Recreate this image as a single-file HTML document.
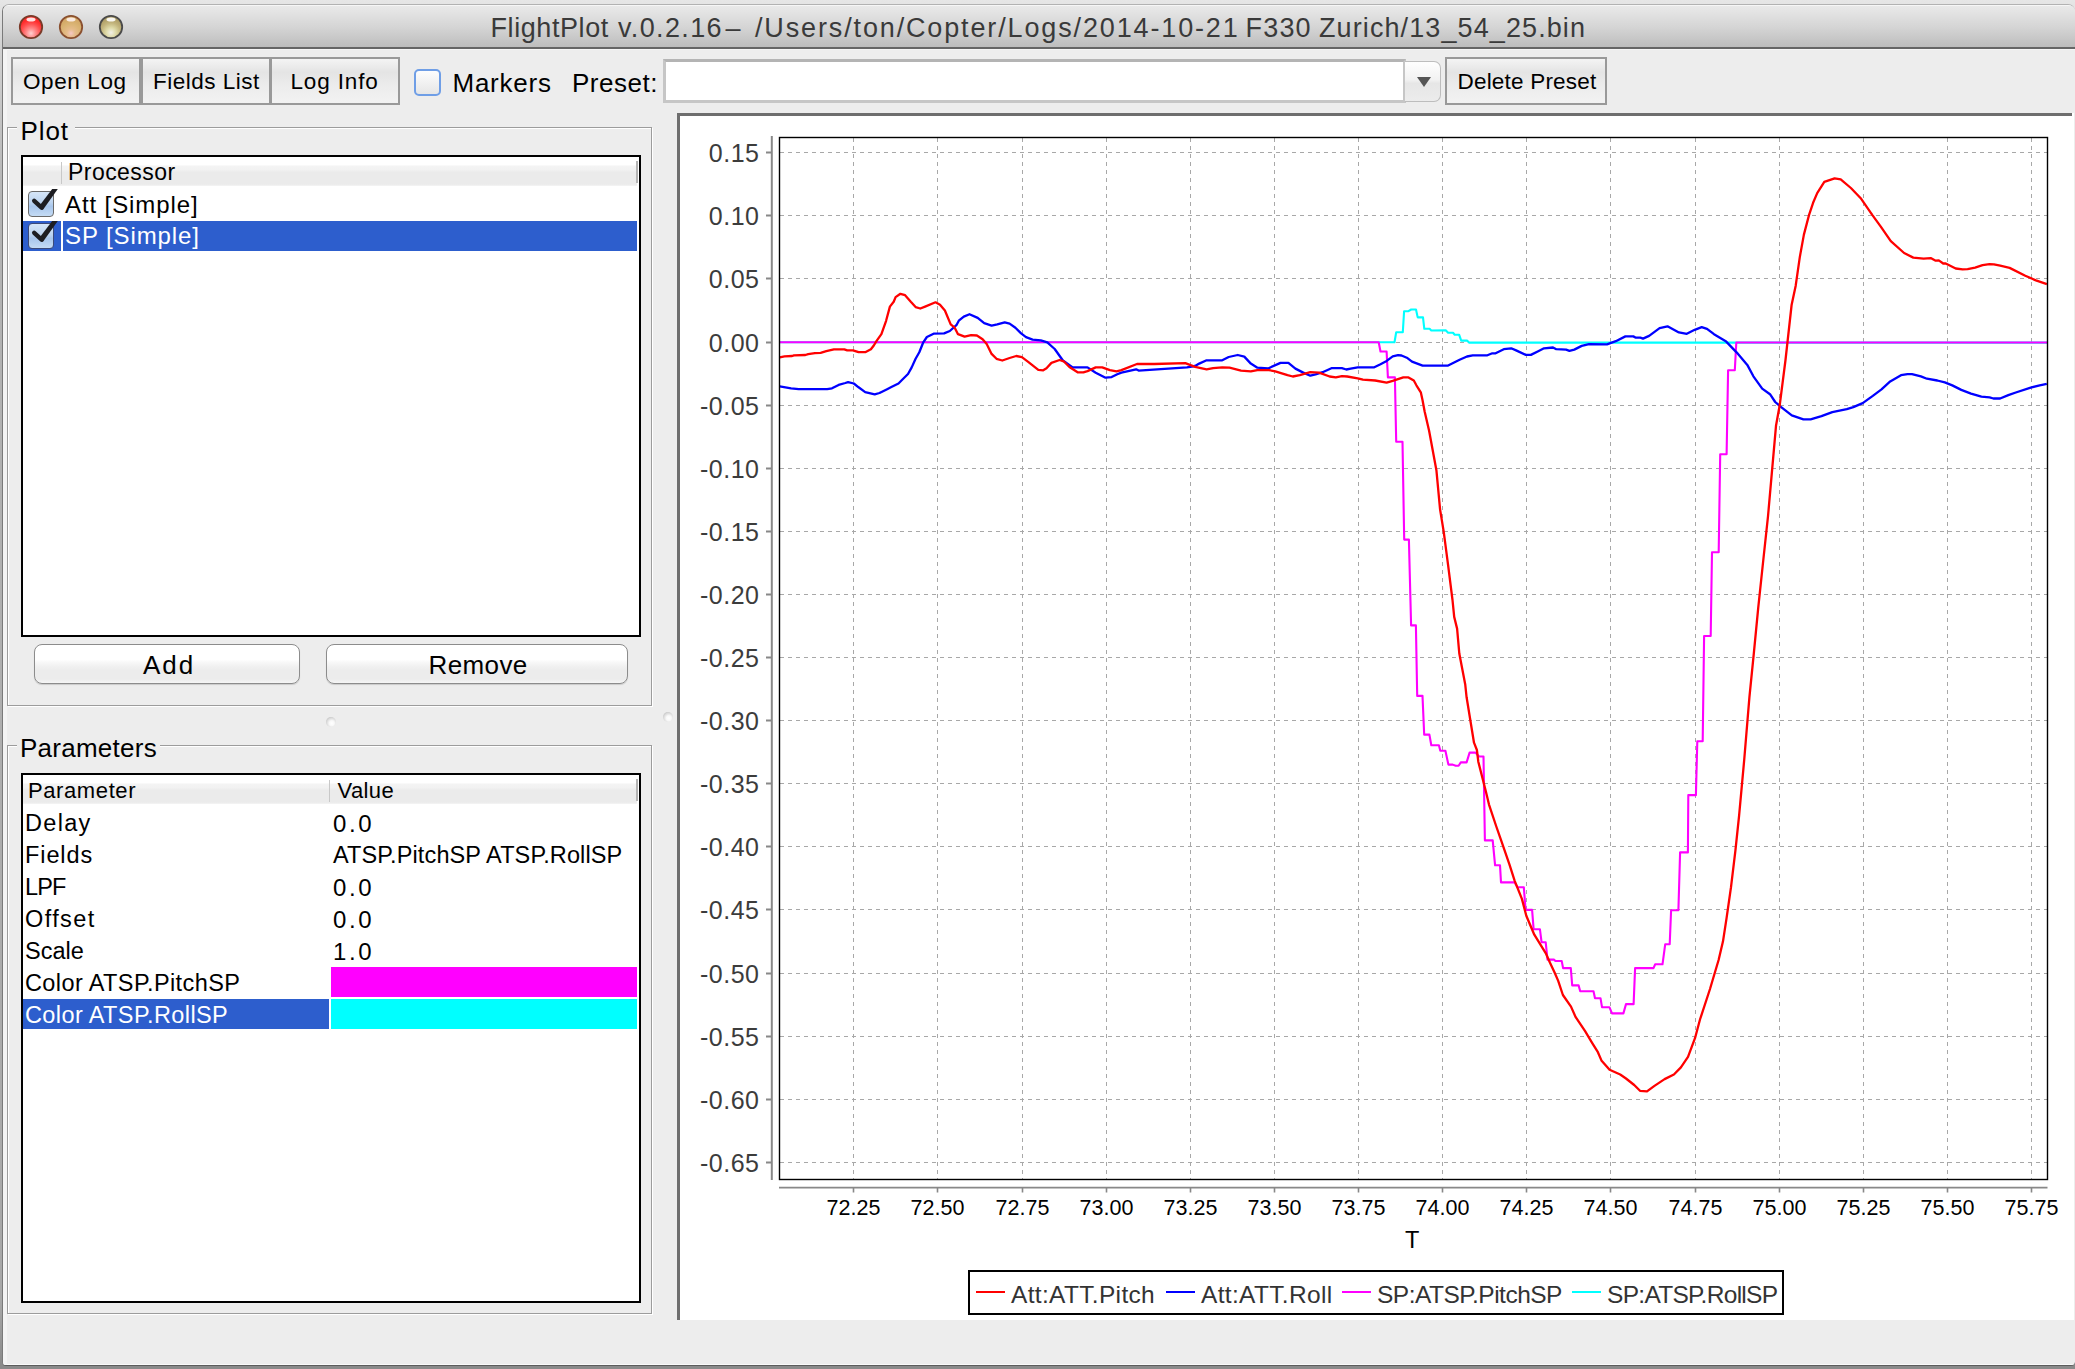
<!DOCTYPE html>
<html><head><meta charset="utf-8">
<style>
html,body{margin:0;padding:0;}
body{width:2075px;height:1369px;position:relative;overflow:hidden;background:linear-gradient(#e6e6e6,#d2d2d2 45px,#b4b4b4 200px,#a8a8a8 1300px,#8a8a8a 1366px);font-family:"Liberation Sans",sans-serif;}
.a{position:absolute;}
.t{position:absolute;white-space:pre;line-height:1;color:#000;}
#win{position:absolute;left:2px;top:4px;width:2073px;height:1362px;background:#ededed;border-radius:7px 7px 4px 4px;border-left:1px solid #7a7a7a;border-top:1px solid #b2b2b2;border-bottom:1px solid #5c5c5c;box-sizing:border-box;overflow:hidden;}
#win:after{content:"";position:absolute;left:0;top:44px;width:4px;bottom:0;background:#f4f4f4;}
#win:before{content:"";position:absolute;left:0;right:0;bottom:0;height:1px;background:#fafafa;}
#title{position:absolute;left:0;top:0;width:100%;height:42px;background:linear-gradient(#e9e9e9,#d5d5d5 50%,#bcbcbc);border-top:1px solid #f6f6f6;}
#tline{position:absolute;left:0;top:42px;width:100%;height:2px;background:#666;border-bottom:1px solid #f6f6f6;}
.light{position:absolute;width:24px;height:24px;border-radius:50%;}
.tbtn{position:absolute;top:57px;height:44px;border:2px solid #999;background:linear-gradient(#f4f4f4,#e4e4e4 30%,#ececec 60%,#f2f2f2);}
.etch{position:absolute;border:1px solid #9c9c9c;box-shadow:inset 1px 1px 0 #fff,1px 1px 0 #fff;}
.tbl{position:absolute;background:#fff;border:2px solid #000;}
.hdr{position:absolute;background:linear-gradient(#fff 0,#fff 26%,#f4f4f4 32%,#f2f2f2 44%,#ebebeb 52%,#ebebeb 94%,#f5f5f5 100%);}
.rbtn{position:absolute;border:1px solid #8c8c8c;border-radius:8px;background:linear-gradient(#ffffff 0,#ffffff 38%,#f8f8f8 45%,#f1f1f1 56%,#ececec 66%,#ececec 90%,#f6f6f6 100%);box-shadow:0 1px 1px rgba(0,0,0,0.15);}
.dot{position:absolute;width:10px;height:10px;border-radius:50%;background:radial-gradient(circle at 58% 62%,#ffffff 0,#f8f8f8 30%,#d8d8d8 62%,#a6a6a6 100%);}
.yl{left:658.5px;width:101px;text-align:right;font-size:25px;color:#3c3c3c;letter-spacing:0.5px;}
.xl{width:120px;text-align:center;font-size:21.5px;color:#000;}
.lg{top:1282.5px;font-size:24.5px;color:#333;letter-spacing:0.33px;}
.ttl{top:15px;font-size:27px;color:#3a3a3a;}
</style></head>
<body>
<div id="win">
  <div id="title"></div>
  <div id="tline"></div>
</div>
<!-- traffic lights -->
<svg class="a" style="left:0;top:0" width="140" height="50">
<defs>
<radialGradient id="gr" cx="50%" cy="78%" r="60%"><stop offset="0" stop-color="#ffd0d0"/><stop offset="0.35" stop-color="#ff8a8a"/><stop offset="0.7" stop-color="#ff5050"/><stop offset="1" stop-color="#ff2a2a"/></radialGradient>
<radialGradient id="gy" cx="50%" cy="78%" r="60%"><stop offset="0" stop-color="#f6c8c4"/><stop offset="0.3" stop-color="#e6bc8c"/><stop offset="0.7" stop-color="#dab474"/><stop offset="1" stop-color="#d4aa68"/></radialGradient>
<radialGradient id="gg" cx="50%" cy="75%" r="62%"><stop offset="0" stop-color="#f2f0e8"/><stop offset="0.35" stop-color="#dedaa8"/><stop offset="0.7" stop-color="#c2b47c"/><stop offset="1" stop-color="#b0a068"/></radialGradient>
</defs>
<circle cx="31" cy="27" r="11.2" fill="url(#gr)" stroke="#7a3a28" stroke-width="1.8"/>
<ellipse cx="31" cy="19.5" rx="4.5" ry="2" fill="#ffffff" opacity="0.85"/>
<circle cx="71" cy="27" r="11.2" fill="url(#gy)" stroke="#8a5030" stroke-width="1.8"/>
<ellipse cx="71" cy="19.5" rx="4.5" ry="2" fill="#fff4f4" opacity="0.85"/>
<circle cx="111" cy="27" r="11.2" fill="url(#gg)" stroke="#4a4a4a" stroke-width="1.8"/>
<ellipse cx="111" cy="19.5" rx="4.5" ry="2" fill="#ffffff" opacity="0.9"/>
</svg>
<div class="t ttl" style="left:490.5px;letter-spacing:0.58px;">FlightPlot</div>
<div class="t ttl" style="left:618px;letter-spacing:1.35px;">v.0.2.16</div>
<div class="t ttl" style="left:725.5px;letter-spacing:0px;">–</div>
<div class="t ttl" style="left:755px;letter-spacing:1.86px;">/Users/ton/Copter/Logs/2014-10-21</div>
<div class="t ttl" style="left:1245.5px;letter-spacing:1.2px;">F330</div>
<div class="t ttl" style="left:1319px;letter-spacing:1.1px;">Zurich/13_54_25.bin</div>

<!-- toolbar -->
<div class="tbtn" style="left:11px;width:126px;"></div>
<div class="tbtn" style="left:141px;width:126px;"></div>
<div class="tbtn" style="left:270px;width:126px;"></div>
<div class="t" style="left:23px;top:70.5px;font-size:22.5px;letter-spacing:0.6px;">Open Log</div>
<div class="t" style="left:153px;top:70.5px;font-size:22.5px;letter-spacing:0.5px;">Fields List</div>
<div class="t" style="left:290.5px;top:70.5px;font-size:22.5px;letter-spacing:0.85px;">Log Info</div>
<div class="a" style="left:414px;top:69px;width:23px;height:23px;border:2px solid #6f9ee6;border-radius:5px;background:linear-gradient(#fdfdfd,#e6e6e6);"></div>
<div class="t" style="left:452.5px;top:69.5px;font-size:26px;letter-spacing:0.75px;">Markers</div>
<div class="t" style="left:572px;top:69.5px;font-size:26px;letter-spacing:0.5px;">Preset:</div>
<div class="a" style="left:663px;top:59px;width:737px;height:38px;background:#fff;border:3px solid #c6c6c6;border-top-color:#b4b4b4;"></div>
<div class="a" style="left:1405px;top:61px;width:35px;height:39px;border:1px solid #bdbdbd;border-left:none;border-radius:0 7px 7px 0;background:linear-gradient(#fefefe,#f2f2f2 45%,#e6e6e6 55%,#ececec);"></div>
<div class="a" style="left:1417px;top:77px;width:0;height:0;border-left:7px solid transparent;border-right:7px solid transparent;border-top:10px solid #555;"></div>
<div class="tbtn" style="left:1445px;width:158px;"></div>
<div class="t" style="left:1457.5px;top:70.5px;font-size:22.5px;letter-spacing:0.2px;">Delete Preset</div>

<!-- left: Plot -->
<div class="etch" style="left:7px;top:127px;width:643px;height:577px;"></div>
<div class="a" style="left:17px;top:115px;width:58px;height:20px;background:#ededed;"></div>
<div class="t" style="left:20.5px;top:118px;font-size:26px;letter-spacing:0.9px;">Plot</div>
<div class="tbl" style="left:21px;top:155px;width:616px;height:478px;"></div>
<div class="hdr" style="left:23px;top:157px;width:614px;height:29px;"></div>
<div class="a" style="left:61px;top:162px;width:1px;height:22px;background:#c8c8c8;"></div>
<div class="a" style="left:636px;top:161px;width:2px;height:22px;background:#b4b4b4;"></div>
<div class="t" style="left:68px;top:161px;font-size:23px;letter-spacing:0.45px;">Processor</div>
<div class="a" style="left:23px;top:221px;width:38px;height:30px;background:#2d5ecd;"></div>
<div class="a" style="left:63px;top:221px;width:574px;height:30px;background:#2d5ecd;"></div>
<div class="t" style="left:65px;top:193px;font-size:24px;letter-spacing:0.9px;">Att [Simple]</div>
<div class="t" style="left:65px;top:224px;font-size:24px;color:#fff;letter-spacing:0.9px;">SP [Simple]</div>
<div class="a" style="left:28px;top:191px;width:24px;height:24px;border:1px solid #6a6a6a;border-radius:4px;background:linear-gradient(#d6e6f8,#bcd4f0 45%,#a8c6ec 60%,#c4dbf4);"></div>
<div class="a" style="left:28px;top:223px;width:24px;height:24px;border:1px solid #3c4a78;border-radius:4px;background:linear-gradient(#d6e6f8,#bcd4f0 45%,#a8c6ec 60%,#c4dbf4);"></div>
<svg class="a" style="left:0;top:0" width="700" height="260"><path d="M34.2 200.8 L41.6 207.6" stroke="#1d1e22" stroke-width="4.4" stroke-linecap="round" fill="none"/><polygon points="38.9,206.6 42.8,210.0 57.8,189.0 52.2,189.0" fill="#1d1e22"/><path d="M34.2 232.8 L41.6 239.6" stroke="#1d1e22" stroke-width="4.4" stroke-linecap="round" fill="none"/><polygon points="38.9,238.6 42.8,242.0 57.8,221.0 52.2,221.0" fill="#1d1e22"/></svg>

<div class="rbtn" style="left:34px;top:644px;width:264px;height:38px;"></div>
<div class="rbtn" style="left:326px;top:644px;width:300px;height:38px;"></div>
<div class="t" style="left:143px;top:652px;font-size:26px;letter-spacing:2px;">Add</div>
<div class="t" style="left:428.5px;top:652px;font-size:26px;letter-spacing:0.4px;">Remove</div>

<div class="dot" style="left:326px;top:717px;"></div>
<div class="dot" style="left:663px;top:712px;"></div>

<!-- left: Parameters -->
<div class="etch" style="left:7px;top:745px;width:643px;height:567px;"></div>
<div class="a" style="left:17px;top:733px;width:143px;height:20px;background:#ededed;"></div>
<div class="t" style="left:20px;top:735px;font-size:26px;letter-spacing:0.25px;">Parameters</div>
<div class="tbl" style="left:21px;top:773px;width:616px;height:526px;"></div>
<div class="hdr" style="left:23px;top:775px;width:614px;height:29px;"></div>
<div class="a" style="left:329px;top:780px;width:1px;height:22px;background:#c8c8c8;"></div>
<div class="a" style="left:636px;top:779px;width:2px;height:22px;background:#b4b4b4;"></div>
<div class="t" style="left:28px;top:779.5px;font-size:22px;letter-spacing:0.6px;">Parameter</div>
<div class="t" style="left:337.5px;top:779.5px;font-size:22px;letter-spacing:0.4px;">Value</div>

<div class="t" style="left:25px;top:811.5px;font-size:23.5px;letter-spacing:1.3px;">Delay</div>
<div class="t" style="left:25px;top:843.5px;font-size:23.5px;letter-spacing:0.9px;">Fields</div>
<div class="t" style="left:25px;top:875.5px;font-size:23.5px;letter-spacing:-0.9px;">LPF</div>
<div class="t" style="left:25px;top:907.5px;font-size:23.5px;letter-spacing:1.4px;">Offset</div>
<div class="t" style="left:25px;top:939.5px;font-size:23.5px;">Scale</div>
<div class="t" style="left:25px;top:971.5px;font-size:23.5px;letter-spacing:0.4px;">Color ATSP.PitchSP</div>
<div class="a" style="left:23px;top:999px;width:306px;height:30px;background:#2d5ecd;"></div>
<div class="t" style="left:25px;top:1003.5px;font-size:23.5px;color:#fff;letter-spacing:0.4px;">Color ATSP.RollSP</div>
<div class="t" style="left:333px;top:811.5px;font-size:24px;letter-spacing:2.6px;">0.0</div>
<div class="t" style="left:333px;top:843.5px;font-size:23.5px;letter-spacing:0.12px;">ATSP.PitchSP ATSP.RollSP</div>
<div class="t" style="left:333px;top:875.5px;font-size:24px;letter-spacing:2.6px;">0.0</div>
<div class="t" style="left:333px;top:907.5px;font-size:24px;letter-spacing:2.6px;">0.0</div>
<div class="t" style="left:333px;top:939.5px;font-size:24px;letter-spacing:2.6px;">1.0</div>
<div class="a" style="left:331px;top:967px;width:306px;height:30px;background:#ff00ff;"></div>
<div class="a" style="left:331px;top:999px;width:306px;height:30px;background:#00ffff;"></div>

<!-- right chart panel -->
<div class="a" style="left:677px;top:113px;width:1397px;height:1207px;background:#fff;border-left:3px solid #6e6e6e;border-top:3px solid #6e6e6e;box-sizing:border-box;"></div>
<div class="a" style="left:2072px;top:113px;width:2px;height:3px;background:#fff;"></div>
<svg class="a" style="left:0;top:0" width="2075" height="1369">
<path d="M853.5 138 V1179.5 M937.5 138 V1179.5 M1022.5 138 V1179.5 M1106.5 138 V1179.5 M1190.5 138 V1179.5 M1274.5 138 V1179.5 M1358.5 138 V1179.5 M1442.5 138 V1179.5 M1526.5 138 V1179.5 M1610.5 138 V1179.5 M1695.5 138 V1179.5 M1779.5 138 V1179.5 M1863.5 138 V1179.5 M1947.5 138 V1179.5 M2031.5 138 V1179.5 M780 152.5 H2047.5 M780 215.5 H2047.5 M780 278.5 H2047.5 M780 342.5 H2047.5 M780 405.5 H2047.5 M780 468.5 H2047.5 M780 531.5 H2047.5 M780 594.5 H2047.5 M780 657.5 H2047.5 M780 720.5 H2047.5 M780 783.5 H2047.5 M780 846.5 H2047.5 M780 909.5 H2047.5 M780 973.5 H2047.5 M780 1036.5 H2047.5 M780 1099.5 H2047.5 M780 1162.5 H2047.5" stroke="#a8a8a8" stroke-width="1" stroke-dasharray="4 4" fill="none"/>
<defs><clipPath id="pc"><rect x="779.5" y="137.5" width="1268.0" height="1042.0"/></clipPath></defs>
<g clip-path="url(#pc)" fill="none" stroke-linejoin="round">
<polyline points="779,342.3 1394.5,342.3 1396.2,332.3 1402.8,332.3 1404.1,311.2 1408.5,311.2 1411.2,309.5 1416,309.5 1417.7,317.4 1423,317.4 1424.3,328.8 1429.6,328.8 1431.3,330.5 1445.7,330.3 1448.1,332.8 1453,332.8 1454.7,334.8 1459.2,334.8 1461.2,340.6 1467,340.6 1469,342.6 2047,342.6" stroke="#00ffff" stroke-width="2.1"/>
<polyline points="779,342.3 1378.7,342.3 1380.5,351.5 1386.6,351.5 1387.9,377.4 1394.9,377.4 1396.2,441.7 1402.5,441.7 1404.2,539.6 1408.9,539.6 1411.1,625.4 1415.9,625.4 1417.2,695.9 1422.5,695.9 1424.2,734.6 1429.4,734.6 1431.3,745.3 1438.9,745.3 1440.3,750.7 1445.4,750.7 1448.4,764.6 1452.7,764.6 1455.7,765.8 1458.6,765.8 1460.8,762.4 1466.6,762.4 1469.6,752.6 1475.4,752.6 1479.1,756.5 1483.5,756.5 1484.9,840.4 1492.7,840.4 1495.1,865.3 1500,865.3 1501,882.4 1514.6,882.4 1517.5,887.2 1523.8,887.2 1525.6,909.9 1532.1,909.9 1533.6,929.2 1539.9,929.2 1541.6,942.3 1545.7,942.3 1547.5,959.6 1554.1,959.6 1555.4,961 1561.7,961 1563.1,968.1 1570.8,968.1 1572.2,985.4 1578.6,985.4 1580.2,991.2 1593.5,991.2 1595,998.2 1600.5,998.2 1602,1007.2 1609.4,1007.2 1612,1013.4 1623.4,1013.4 1626,1004.1 1633.6,1004.1 1635.1,968.1 1653.5,968.1 1655.2,964.3 1662.5,964.3 1665.2,944.3 1669.7,944.3 1671.1,910.3 1678.4,910.3 1680.1,852.4 1687.9,852.4 1688.3,795.1 1695.9,795.1 1697.3,741.3 1702.7,741.3 1704.1,636 1710.7,636 1712,552.3 1718.7,552.3 1720.2,454.3 1726.6,454.3 1728.1,370.2 1734.8,370.2 1736.3,342.5 2047,342.5" stroke="#ff00ff" stroke-width="2.1"/>
<polyline points="779.7,386.4 785.4,387.3 791.1,388.3 798.7,389.2 827.2,389.2 832,388.3 838.6,384.9 845.3,383 848.1,382.1 853.8,383.5 858.6,387.3 865.2,392.1 874.7,394.4 879.5,393 887.1,389.2 890.9,387.3 898.5,383.5 903.2,378.8 908,374 911.7,367.4 915.6,358.8 919.3,352.2 923.1,342.7 926.9,337 933.6,333.7 944.1,333.4 949.8,331 956.4,325.2 958.8,320.7 963.8,316.6 969.5,314.2 977.7,317.9 984.2,323.2 991.6,325.6 997.3,324.4 1004.7,322.4 1009.6,323.6 1015.4,327.7 1021.1,333.4 1026,337.1 1032.6,339.6 1040.8,340.4 1047.3,342.4 1054.7,349 1062.9,360.5 1072.7,367.4 1087.5,367.4 1095.7,372.7 1105.5,377.7 1111.6,377.1 1117.3,374.2 1121.4,372.6 1136.1,369.3 1138.6,370.6 1186.9,367.3 1195.1,366 1199.2,363.6 1206.6,360.3 1222.2,360.3 1228.7,357 1237.7,355 1244.3,356.6 1250.8,363.6 1257.4,367.7 1268,368.5 1280.5,362.9 1288.4,362.9 1295.4,368.6 1303.3,372.6 1310.3,375.7 1315.6,374.3 1322.6,372.2 1331.4,368.2 1341.9,368.2 1346.3,369.5 1350.7,368.6 1357.7,367.3 1374.3,367.3 1380.5,364.3 1385.7,361.6 1392.7,356.4 1398,355.1 1401.5,355.5 1406.8,357.7 1412,361.6 1422.6,365.6 1448.1,365.5 1459.6,359.8 1467,356.5 1472.7,355.3 1487.4,355.3 1492.3,353.3 1495.6,353.3 1503.8,349.2 1511.2,348.3 1516.1,350.4 1525.9,354.9 1530.9,354.9 1538.2,351.2 1544,348.3 1553,347.5 1556.3,349.2 1566.1,349.6 1569.4,350.8 1574.3,349.6 1581.7,345.9 1589,344.2 1607,344.3 1615.8,341.2 1625.4,336.4 1633.3,336.4 1635.9,337.7 1640.3,337.7 1643,338.6 1649.1,335.9 1659.6,328.1 1667.5,326.3 1678.9,332.4 1686.8,333.8 1694.7,329.8 1701.7,327.2 1707,328.9 1714,334.2 1726.2,341.6 1736.8,352.6 1747.3,364.9 1753.4,376.3 1762.2,388.6 1770,394.2 1775.2,402 1780.2,406.3 1791.8,415.4 1803.4,419.4 1810.6,419.4 1821.5,416.1 1832.3,412.1 1846.8,409.2 1853.3,407.1 1862.7,403.1 1872.8,395.9 1881.5,389.3 1890.2,381.4 1901,375.2 1907.5,374.2 1912,374.2 1920.9,376.4 1926.9,378.7 1937.3,380.5 1944.8,382.4 1952.3,385.4 1961.3,389.9 1971,393.6 1981.4,396.6 1989.6,397.4 1993.4,398.5 2000.1,398.5 2008.3,395.1 2015.8,392.5 2030.7,387.6 2039.7,385.4 2046.8,383.9" stroke="#0000ff" stroke-width="2.3"/>
<polyline points="779.7,357.4 784.5,356.4 792.1,356 794,355.3 805.4,355 808.2,354.1 814.9,353.1 820.6,352.9 826.3,351.2 833.9,349.3 844.3,349.3 847.2,350.3 852.9,350.3 858.6,352.2 865.2,352.2 870.9,349.3 873.8,345.5 876.6,340.8 881.4,334.1 886.1,320.8 889.9,306.6 893.7,301.8 895.6,297.1 900.4,293.8 905.1,295.2 910.8,301.8 915.6,307.1 920.3,308.5 925.1,306.6 935.5,302.3 940,304.7 944.9,310.5 950.7,324.4 954.7,327.7 958,334.2 964.6,336.7 971.1,335.1 976.9,335.5 982.6,339.2 986.7,344.1 991.6,353.9 996.5,358.8 1002.3,360.5 1009.6,358 1016.2,356 1021.9,357.2 1028.5,362.1 1038.3,369.9 1043.2,370.3 1046.5,368.2 1051.4,362.9 1059.6,360 1063.7,361.3 1069.4,367 1077.6,372.3 1083.4,372.3 1087.5,371.1 1095.7,367.4 1102.2,367.4 1109.9,370.1 1116.5,371.4 1121.4,370.1 1137,364 1154.2,364 1185.3,363.2 1195.1,366.9 1206.6,369.3 1213.1,368.1 1222.2,367.3 1229.5,367.7 1241,370.6 1250.8,371.4 1257.4,370.1 1268.9,370.1 1275.3,371.3 1287.5,375.2 1292.8,376.5 1299.8,375.2 1310.3,372.2 1319.1,372.6 1329.6,376.5 1335.8,377.4 1341.9,376.1 1347.2,376.5 1357.7,378.3 1362.9,379.6 1375.2,380.5 1386.6,382.7 1392.7,380.9 1403.3,377.4 1408.5,377.4 1413.8,380.5 1416.4,385.3 1420.8,392.3 1422.5,400 1424.7,411.7 1429.1,430.7 1436.4,470.2 1440.1,509.6 1443.7,531.6 1448.1,565.2 1452.5,600 1454.2,616.9 1457.1,628.6 1459.3,653.5 1465.2,684.2 1466.6,697.3 1474,742.7 1476.9,750 1478.3,761.7 1486,792 1489,804.6 1496.3,826.5 1501.4,841.2 1509.5,864.6 1514.6,880.6 1521.9,898.9 1526.3,915.7 1534.3,934.7 1546,953.7 1550,962.8 1554.7,972.7 1558.2,980.9 1562.9,995 1571,1006.6 1575.7,1017.2 1585.1,1031.2 1592.1,1042.9 1597.9,1052.2 1601.4,1060.4 1609.6,1069.8 1620.2,1074.5 1626,1078.5 1634.2,1085 1640,1090.8 1647,1091.4 1654.1,1086.1 1664.6,1079.1 1673.9,1074.5 1680.9,1067.4 1688,1056.9 1695,1038.2 1700,1019.5 1710,989 1718.6,960 1723,941.3 1726.6,917.9 1731,887.2 1735.4,850.6 1739.1,815.6 1744.2,760 1749.4,697.4 1753.8,653.6 1758.2,608.2 1763.3,560 1768,516.4 1776,425.8 1779.7,405.3 1785.5,360 1791.6,305 1795.7,285.7 1799.8,257.1 1803.9,234.6 1809,215.1 1813.1,202.8 1817.2,193.1 1824.3,181.9 1834.6,178.3 1840.7,179.3 1850.9,188 1861.2,198.8 1872.4,215.1 1880.6,226.4 1890.8,241.2 1904.1,253 1913.3,257.6 1923.6,258.6 1930.7,258.1 1935.7,260.7 1938.8,260.4 1943.2,263.5 1945.7,263.5 1955.7,268.5 1962.6,269.4 1967.6,269.1 1975.1,267.6 1982.6,265.1 1989.5,264.1 1993.9,264.4 2000.2,265.7 2009.6,267.9 2025.3,275.7 2035.9,280.4 2046.9,284.2" stroke="#ff0000" stroke-width="2.3"/>
</g>
<rect x="779.5" y="137.5" width="1268.0" height="1042.0" fill="none" stroke="#000" stroke-width="1.4"/>
<path d="M771.8 136 V1180 M766 152.5 H772 M766 215.5 H772 M766 278.5 H772 M766 342.5 H772 M766 405.5 H772 M766 468.5 H772 M766 531.5 H772 M766 594.5 H772 M766 657.5 H772 M766 720.5 H772 M766 783.5 H772 M766 846.5 H772 M766 909.5 H772 M766 973.5 H772 M766 1036.5 H772 M766 1099.5 H772 M766 1162.5 H772" stroke="#888" stroke-width="2" fill="none"/>
<path d="M779 1187.6 H2047.5 M853.5 1187 V1192.5 M937.5 1187 V1192.5 M1022.5 1187 V1192.5 M1106.5 1187 V1192.5 M1190.5 1187 V1192.5 M1274.5 1187 V1192.5 M1358.5 1187 V1192.5 M1442.5 1187 V1192.5 M1526.5 1187 V1192.5 M1610.5 1187 V1192.5 M1695.5 1187 V1192.5 M1779.5 1187 V1192.5 M1863.5 1187 V1192.5 M1947.5 1187 V1192.5 M2031.5 1187 V1192.5" stroke="#888" stroke-width="1.6" fill="none"/>
</svg>
<div class="t yl" style="top:140.8px;">0.15</div>
<div class="t yl" style="top:203.8px;">0.10</div>
<div class="t yl" style="top:266.8px;">0.05</div>
<div class="t yl" style="top:330.8px;">0.00</div>
<div class="t yl" style="top:393.8px;">-0.05</div>
<div class="t yl" style="top:456.8px;">-0.10</div>
<div class="t yl" style="top:519.8px;">-0.15</div>
<div class="t yl" style="top:582.8px;">-0.20</div>
<div class="t yl" style="top:645.8px;">-0.25</div>
<div class="t yl" style="top:708.8px;">-0.30</div>
<div class="t yl" style="top:771.8px;">-0.35</div>
<div class="t yl" style="top:834.8px;">-0.40</div>
<div class="t yl" style="top:897.8px;">-0.45</div>
<div class="t yl" style="top:961.8px;">-0.50</div>
<div class="t yl" style="top:1024.8px;">-0.55</div>
<div class="t yl" style="top:1087.8px;">-0.60</div>
<div class="t yl" style="top:1150.8px;">-0.65</div>
<div class="t xl" style="left:793.5px;top:1198.2px;">72.25</div>
<div class="t xl" style="left:877.5px;top:1198.2px;">72.50</div>
<div class="t xl" style="left:962.5px;top:1198.2px;">72.75</div>
<div class="t xl" style="left:1046.5px;top:1198.2px;">73.00</div>
<div class="t xl" style="left:1130.5px;top:1198.2px;">73.25</div>
<div class="t xl" style="left:1214.5px;top:1198.2px;">73.50</div>
<div class="t xl" style="left:1298.5px;top:1198.2px;">73.75</div>
<div class="t xl" style="left:1382.5px;top:1198.2px;">74.00</div>
<div class="t xl" style="left:1466.5px;top:1198.2px;">74.25</div>
<div class="t xl" style="left:1550.5px;top:1198.2px;">74.50</div>
<div class="t xl" style="left:1635.5px;top:1198.2px;">74.75</div>
<div class="t xl" style="left:1719.5px;top:1198.2px;">75.00</div>
<div class="t xl" style="left:1803.5px;top:1198.2px;">75.25</div>
<div class="t xl" style="left:1887.5px;top:1198.2px;">75.50</div>
<div class="t xl" style="left:1971.5px;top:1198.2px;">75.75</div>
<div class="t" style="left:1405px;top:1229.0px;font-size:23.5px;">T</div>
<div class="a" style="left:968px;top:1270px;width:812px;height:41px;border:2px solid #000;background:#fff;"></div>
<div class="a" style="left:976px;top:1291px;width:29px;height:2px;background:#ff0000;"></div>
<div class="a" style="left:1166px;top:1291px;width:29px;height:2px;background:#0000ff;"></div>
<div class="a" style="left:1342px;top:1291px;width:29px;height:2px;background:#ff00ff;"></div>
<div class="a" style="left:1572px;top:1291px;width:29px;height:2px;background:#00ffff;"></div>
<div class="t lg" style="left:1011px;">Att:ATT.Pitch</div>
<div class="t lg" style="left:1201px;">Att:ATT.Roll</div>
<div class="t lg" style="left:1377px;letter-spacing:-0.5px;">SP:ATSP.PitchSP</div>
<div class="t lg" style="left:1607px;letter-spacing:-0.7px;">SP:ATSP.RollSP</div>

</body></html>
